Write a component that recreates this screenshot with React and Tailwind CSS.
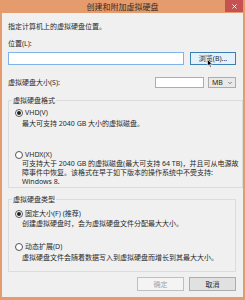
import { ChevronDown, X } from 'lucide-react';

function Radio({ checked }) {
  return (
    <span className="flex h-[8px] w-[8px] shrink-0 items-center justify-center rounded-full border border-[#555] bg-white">
      {checked && <span className="h-[4px] w-[4px] rounded-full bg-[#222]" />}
    </span>
  );
}

function Group({ title, className, children }) {
  return (
    <fieldset className={`border border-[#dcdcdc] ${className}`}>
      <legend className="ml-[3px] px-[1px] leading-[9px]">{title}</legend>
      {children}
    </fieldset>
  );
}

export default function App() {
  return (
    <div
      className="flex h-[300px] w-[245px] flex-col bg-[#e69b6d] px-[2px] pb-[3px] text-[7px] text-[#2a2a2a]"
      style={{ fontFamily: '"Noto Sans", "Noto Sans CJK SC", sans-serif' }}
    >
      {/* 标题栏 */}
      <div className="relative flex h-[13px] shrink-0 items-center justify-center">
        <span className="text-[8px] leading-[13px] text-[#3b2a20]">创建和附加虚拟硬盘</span>
        <div className="absolute right-0 top-0 flex h-[12px] w-[18px] items-center justify-center bg-[#c75050]">
          <X size={7} strokeWidth={3} color="#ffffff" />
        </div>
      </div>

      {/* 内容 */}
      <div className="flex flex-1 flex-col bg-[#f0f0f0] pl-[6px] pr-[7px]">
        <div className="mt-[9px] leading-[9px]">指定计算机上的虚拟硬盘位置。</div>
        <div className="mt-[8px] leading-[9px]">位置(L):</div>

        <div className="mt-[4px] flex h-[13px] gap-[6px]">
          <div className="flex-1 border border-[#7eb4ea] bg-white" />
          <div className="relative flex w-[46px] items-center justify-center border border-[#3c7fb1] bg-[#e5f1fb] leading-none">
            浏览(B)...
            <svg
              className="absolute left-[16px] top-[6px]"
              width="6"
              height="9"
              viewBox="0 0 12 18"
            >
              <path d="M1 1 L1 14 L4 11 L6.5 16.5 L8.5 15.5 L6 10 L10.5 10 Z" fill="#000" stroke="#fff" strokeWidth="1.2" />
            </svg>
          </div>
        </div>

        <div className="mt-[12px] flex h-[11px] items-center">
          <div className="flex-1 leading-[9px]">虚拟硬盘大小(S):</div>
          <div className="h-full w-[49px] border border-[#abadb3] bg-white" />
          <div className="ml-[4px] flex h-full w-[28px] items-center justify-between border border-[#acacac] bg-[#e9e9e9] pl-[3px] pr-[2px] leading-none">
            MB
            <ChevronDown size={6} strokeWidth={2.5} color="#444" />
          </div>
        </div>

        <Group title="虚拟硬盘格式" className="mt-[8px] pb-[1px]">
          <div className="pl-[6px] pr-[4px]">
            <div className="mt-[3px] flex h-[9px] items-center gap-[2px]">
              <Radio checked />
              <span className="leading-[9px]">VHD(V)</span>
            </div>
            <div className="mt-[2px] pl-[7px] leading-[9px]">最大可支持 2040 GB 大小的虚拟磁盘。</div>

            <div className="mt-[22px] flex h-[9px] items-center gap-[2px]">
              <Radio />
              <span className="leading-[9px]">VHDX(X)</span>
            </div>
            <div className="pl-[7px] leading-[9px] whitespace-nowrap">
              可支持大于 2040 GB 的虚拟磁盘(最大可支持 64 TB)，并且可从电源故
              <br />
              障事件中恢复。该格式在早于如下版本的操作系统中不受支持:
              <br />
              Windows 8.
            </div>
          </div>
        </Group>

        <Group title="虚拟硬盘类型" className="mt-[7px] pb-[9px]">
          <div className="pl-[6px] pr-[4px]">
            <div className="mt-[5px] flex h-[9px] items-center gap-[2px]">
              <Radio checked />
              <span className="leading-[9px]">固定大小(F) (推荐)</span>
            </div>
            <div className="mt-[1px] pl-[7px] leading-[9px]">创建虚拟硬盘时，会为虚拟硬盘文件分配最大大小。</div>

            <div className="mt-[14px] flex h-[9px] items-center gap-[2px]">
              <Radio />
              <span className="leading-[9px]">动态扩展(D)</span>
            </div>
            <div className="mt-[2px] pl-[7px] leading-[9px]">虚拟硬盘文件会随着数据写入到虚拟硬盘而增长到其最大大小。</div>
          </div>
        </Group>

        <div className="mt-[5px] flex justify-end gap-[5px]">
          <div className="flex h-[14px] w-[47px] items-center justify-center border border-[#bfbfbf] bg-[#f4f4f4] leading-none text-[#a3a3a3]">
            确定
          </div>
          <div className="flex h-[14px] w-[47px] items-center justify-center border border-[#adadad] bg-[#e1e1e1] leading-none">
            取消
          </div>
        </div>
      </div>
    </div>
  );
}
